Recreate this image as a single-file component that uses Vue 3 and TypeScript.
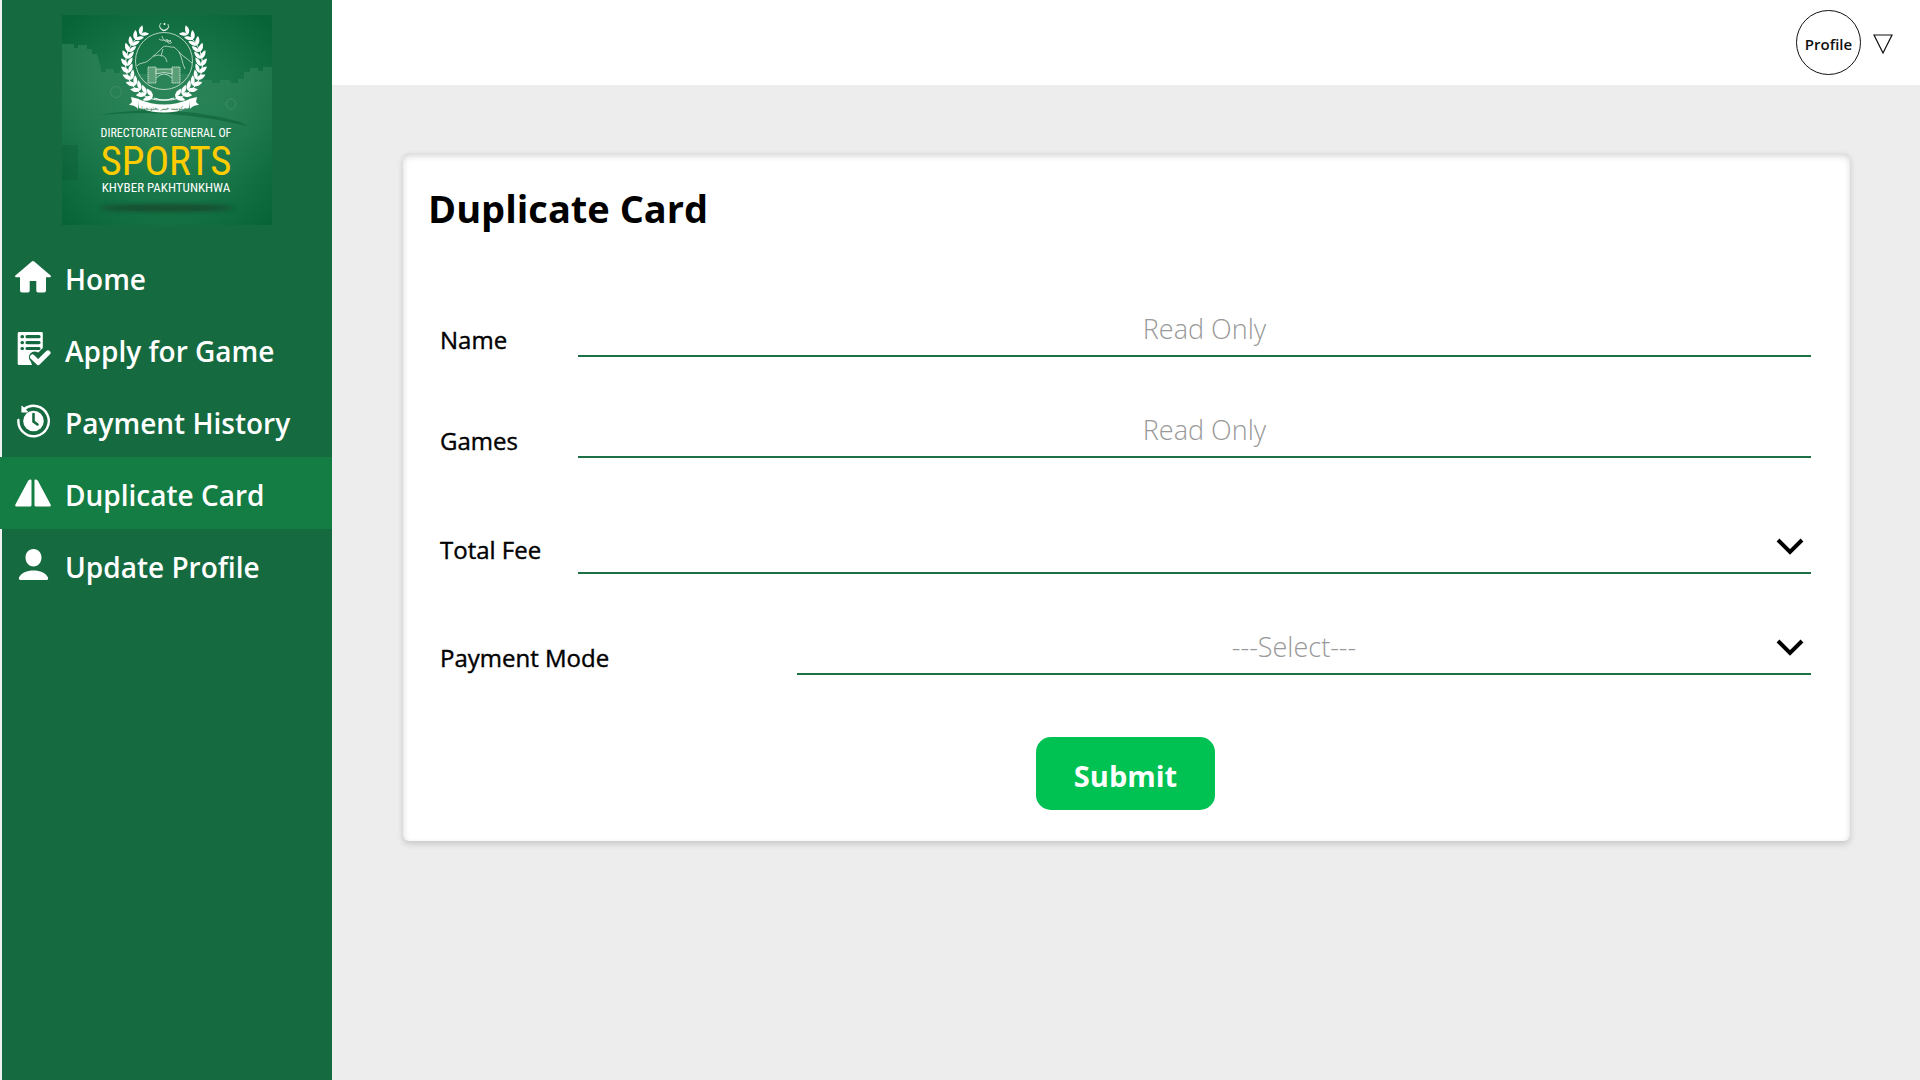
<script setup lang="ts">
import { ref } from 'vue'

interface NavItem {
  label: string
  icon: 'home' | 'apply' | 'history' | 'duplicate' | 'user'
}

interface Leaf {
  x: number
  y: number
  angle: number
  size: number
}

const navItems: NavItem[] = [
  { label: 'Home', icon: 'home' },
  { label: 'Apply for Game', icon: 'apply' },
  { label: 'Payment History', icon: 'history' },
  { label: 'Duplicate Card', icon: 'duplicate' },
  { label: 'Update Profile', icon: 'user' },
]

const active = ref('Duplicate Card')
const totalFee = ref('')
const paymentMode = ref('')

// Leaves of the left laurel branch; the right one is its mirror image.
const leaves: Leaf[] = []
const pairs = 12
for (let i = 0; i < pairs; i++) {
  const deg = 108 + i * 11
  const rad = (deg * Math.PI) / 180
  const x = 102 + 36 * Math.cos(rad)
  const y = 47 + 36 * Math.sin(rad)
  const size = 1.15 - i * 0.012
  leaves.push({ x, y, angle: deg + 90 - 38, size })
  leaves.push({ x, y, angle: deg + 90 + 34, size: size * 0.9 })
}
</script>

<template>
  <div class="layout">
    <aside class="sidebar">
      <svg class="logo" viewBox="0 0 210 210" role="img" aria-label="Directorate General of Sports Khyber Pakhtunkhwa">
        <defs>
          <radialGradient id="logo-bg" cx="50%" cy="52%" r="68%">
            <stop offset="0" stop-color="#228355" />
            <stop offset="0.55" stop-color="#177548" />
            <stop offset="1" stop-color="#066437" />
          </radialGradient>
          <linearGradient id="fort" x1="0" y1="0" x2="0" y2="1">
            <stop offset="0" stop-color="#6aa883" stop-opacity="0.26" />
            <stop offset="1" stop-color="#6aa883" stop-opacity="0" />
          </linearGradient>
          <filter id="soft" x="-20%" y="-200%" width="140%" height="500%">
            <feGaussianBlur stdDeviation="2.5" />
          </filter>
        </defs>
        <rect width="210" height="210" fill="url(#logo-bg)" />
        <path
          d="M0 29h12v4h4v-3h9v4h5v5h5l4 14v4h5v-3h8v4h6v-3h10v4h72v6h10v3h8v-3h10v3h8v-4h6v-7h6v-4h8v3h5v-4h9v110H0z"
          fill="url(#fort)"
        />
        <path d="M38 100 Q108 88 178 107 L186 111 Q108 93 38 100z" fill="#075a32" opacity="0.5" />
        <g fill="none" stroke="#4d9269" stroke-width="1" opacity="0.7">
          <circle cx="54" cy="77" r="5.500" />
          <circle cx="169" cy="89" r="5" />
        </g>
        <path d="M0 130h16v35H0z" fill="#0b5a34" opacity="0.35" />

        <path d="M99 8 A4.500 4.500 0 1 0 106 9 A4.400 4 0 1 1 99 8z" fill="#fff" stroke="#fff" stroke-width="0.4" />
        <circle cx="102.500" cy="9" r="1" fill="#fff" />
        <circle cx="102" cy="46" r="28.500" fill="none" stroke="#d5e8dc" stroke-width="0.8" />
        <g fill="none" stroke="#cfe3d6" stroke-width="0.8">
          <path d="M75 51c3-4 8-2 12-6 6-5 9-8 13-12 3-4 8 0 12-1 5 4 8 9 12 11l6 5" />
          <path d="M91 41c4 0 6-2 8 0 3-1 5 2 6 6M101 34l-2 7M117 37c3 5 3 11 6 17" />
          <path d="M97 24c4 3 8-1 12 3m-9-6c1 5 6 8 9 4m-4-1c0 4 3 6 5 3" />
        </g>
        <g fill="#5b9f77" stroke="#dcebe1" stroke-width="0.8">
          <path d="M86 52h8v16h-8zM110 52h8v16h-8z" stroke-dasharray="1.500 0.500" />
          <path d="M94 54h16v5q-8-3-16 0z" />
          <path d="M94 63q8-8 16 0" fill="none" />
        </g>
        <g v-for="side in 2" :key="side" :transform="side === 2 ? 'translate(204 0) scale(-1 1)' : undefined">
          <path d="M112 83 A36 36 0 0 1 76 22" fill="none" stroke="#fff" stroke-width="1" />
          <path
            v-for="(leaf, i) in leaves"
            :key="i"
            d="M0 0C2-3 6-3.200 9.500 0 6 2.200 2 2 0 0z"
            fill="#fff"
            :transform="`translate(${leaf.x} ${leaf.y}) rotate(${leaf.angle}) scale(${leaf.size})`"
          />
        </g>
        <path d="M69 82l8 2-1 10q-3-4-9-4l3-3z M135 82l-8 2 1 10q3-4 9-4l-3-3z" fill="#fff" />
        <path d="M76 84Q102 95 128 84l-1 9Q102 102 77 93z" fill="#fff" />
        <text x="102" y="95" text-anchor="middle" class="logo-ribbon">حکومت خیبر پختونخوا</text>

        <g text-anchor="middle">
          <text x="104" y="122" class="logo-line">DIRECTORATE GENERAL OF</text>
          <text x="104" y="160" class="logo-sports">SPORTS</text>
          <text x="104" y="177" class="logo-region">KHYBER PAKHTUNKHWA</text>
        </g>
        <ellipse cx="105" cy="193" rx="68" ry="3.500" fill="#184a2e" filter="url(#soft)" />
      </svg>

      <nav class="nav">
        <a
          v-for="item in navItems"
          :key="item.label"
          href="#"
          class="nav-item"
          :class="{ active: item.label === active }"
          @click.prevent="active = item.label"
        >
          <svg class="nav-icon" viewBox="0 0 36 36" aria-hidden="true">
            <path
              v-if="item.icon === 'home'"
              d="M16.800 2.600Q18 1.600 19.200 2.600L35.600 16.600Q36.500 18 35 18.300H31V31.500Q31 33.500 29 33.500H23Q21.300 33.500 21.300 31.800V22H14.700V31.800Q14.700 33.500 13 33.500H7Q5 33.500 5 31.500V18.300H1Q-.5 18 .4 16.600z"
              fill="#fff"
            />
            <template v-else-if="item.icon === 'apply'">
              <path d="M4 1h22.500q1.300 0 1.300 1.300V17l-4.500 4.500q-5-2.500-8 1-3 4 .5 8L17 34H4q-1.300 0-1.300-1.300V2.300Q2.700 1 4 1z" fill="#fff" />
              <g stroke="#156a40" stroke-width="3.200" stroke-linecap="round">
                <path d="M12 5.700h12M12 11.600h12M12 17.500h12" />
                <path d="M7 5.700h.5M7 11.600h.5M7 17.500h.5" />
              </g>
              <path d="M17.500 26l5.700 5.500L33 21.800" fill="none" stroke="#fff" stroke-width="5" stroke-linecap="round" stroke-linejoin="round" />
            </template>
            <template v-else-if="item.icon === 'history'">
              <circle cx="18.500" cy="18" r="10.300" fill="#fff" />
              <path d="M18.500 11v7.500l4 3" fill="none" stroke="#156a40" stroke-width="2.600" stroke-linecap="round" />
              <path d="M3.400 17A15.200 15.200 0 1 0 9 6.200" fill="none" stroke="#fff" stroke-width="2.400" stroke-linecap="round" />
              <path d="M7 3.300v5.700h5.500z" fill="#fff" stroke="#fff" stroke-width="1.200" stroke-linejoin="round" />
            </template>
            <path
              v-else-if="item.icon === 'duplicate'"
              d="M15 4.500q1.500-.5 1.500 1V30q0 1.500-1.500 1.500H1.500Q-.4 31.500.4 29.500L13 6q.8-1.200 2-1.500zM21 4.500q-1.500-.5-1.500 1V30q0 1.500 1.500 1.500h13.500q1.900 0 1.100-2L23 6q-.8-1.200-2-1.500z"
              fill="#fff"
            />
            <path
              v-else
              d="M18.500 2c4.800 0 8 3.700 8 8.500s-3.200 9-8 9-8-4.200-8-9S13.700 2 18.500 2zM4 30.500C6 26 12 23.500 18.500 23.500S31 26 33 30.500q.6 2.500-1.500 2.500h-26Q3.400 33 4 30.500z"
              fill="#fff"
            />
          </svg>
          <span class="nav-label">{{ item.label }}</span>
        </a>
      </nav>
    </aside>

    <div class="main">
      <header class="topbar">
        <button type="button" class="avatar">Profile</button>
        <button type="button" class="menu-toggle" aria-label="Open profile menu">
          <svg viewBox="0 0 20 20" aria-hidden="true">
            <path d="M1 1h18L10 19z" fill="none" stroke="#111" stroke-width="1.200" />
          </svg>
        </button>
      </header>

      <main class="content">
        <form class="card" @submit.prevent>
          <h1 class="title">Duplicate Card</h1>

          <div class="row">
            <label for="name">Name</label>
            <div class="field"><input id="name" type="text" placeholder="Read Only" readonly /></div>
          </div>
          <div class="row">
            <label for="games">Games</label>
            <div class="field"><input id="games" type="text" placeholder="Read Only" readonly /></div>
          </div>
          <div class="row row-fee">
            <label for="fee">Total Fee</label>
            <div class="field">
              <select id="fee" v-model="totalFee">
                <option value=""></option>
              </select>
              <svg class="chevron" viewBox="0 0 28 18" aria-hidden="true">
                <path d="M2 2l12 12L26 2" fill="none" stroke="#000" stroke-width="4" />
              </svg>
            </div>
          </div>
          <div class="row row-mode">
            <label for="mode">Payment Mode</label>
            <div class="field">
              <select id="mode" v-model="paymentMode">
                <option value="">---Select---</option>
              </select>
              <svg class="chevron" viewBox="0 0 28 18" aria-hidden="true">
                <path d="M2 2l12 12L26 2" fill="none" stroke="#000" stroke-width="4" />
              </svg>
            </div>
          </div>

          <button type="submit" class="submit">Submit</button>
        </form>
      </main>
    </div>
  </div>
</template>

<style>
body {
  background: #ededed;
}
</style>

<style scoped>
.layout {
  display: flex;
  min-height: 100vh;
  font-family: 'Segoe UI', 'Open Sans', 'Noto Sans', sans-serif;
  color: #000;
}

.layout *,
.layout *::before {
  box-sizing: border-box;
}

.sidebar {
  display: flex;
  flex-direction: column;
  flex: none;
  width: 332px;
  padding-top: 15px;
  background: #156a40;
  box-shadow: inset 2px 0 #f0f2f1;
}

.logo {
  width: 210px;
  height: 210px;
  margin-left: 62px;
}

.logo-line,
.logo-region {
  font-family: 'Liberation Sans Narrow', 'Roboto Condensed', 'Open Sans', sans-serif;
  font-size: 12px;
  fill: #fff;
}

.logo-region {
  font-size: 13px;
}

.logo-sports {
  font-family: 'Liberation Sans Narrow', 'Roboto Condensed', 'Open Sans', sans-serif;
  font-size: 41px;
  fill: #fc0;
}

.logo-ribbon {
  font-family: 'DejaVu Sans', sans-serif;
  font-size: 5px;
  fill: #156a40;
}

.nav {
  display: flex;
  flex-direction: column;
  margin-top: 16px;
}

.nav-item {
  display: flex;
  align-items: center;
  gap: 14px;
  height: 72px;
  padding-left: 15px;
  color: #fff;
  font-size: 28px;
  font-weight: 600;
  text-decoration: none;
  white-space: nowrap;
}

.nav-item.active {
  background: #137d43;
}

.nav-icon {
  flex: none;
  width: 36px;
  height: 36px;
}

.nav-label {
  padding-top: 3px;
}

.main {
  display: flex;
  flex: 1;
  flex-direction: column;
  min-width: 0;
}

.topbar {
  display: flex;
  align-items: center;
  justify-content: flex-end;
  gap: 12px;
  height: 85px;
  padding-right: 27px;
  background: #fff;
}

button {
  padding: 0;
  border: 0;
  background: none;
  font-family: inherit;
  cursor: pointer;
}

.avatar {
  width: 65px;
  height: 65px;
  padding-top: 3px;
  border: 1px solid #111;
  border-radius: 50%;
  color: #111;
  font-size: 15px;
  font-weight: 600;
}

.menu-toggle {
  width: 20px;
  height: 20px;
  margin-top: 3px;
}

.menu-toggle svg {
  display: block;
}

.content {
  padding: 68px 70px 68px 71px;
}

.card {
  display: flex;
  flex-direction: column;
  padding: 27px 39px 31px 37px;
  border-radius: 6px;
  background: #fff;
  box-shadow:
    0 3px 6px rgba(0, 0, 0, 0.16),
    inset 0 3px 6px rgba(0, 0, 0, 0.16);
}

.title {
  margin: 0 0 73px -12px;
  font-size: 38px;
  font-weight: 700;
  line-height: 56px;
}

.row {
  display: flex;
  align-items: flex-end;
  margin-bottom: 53px;
}

.row label {
  flex: none;
  width: 138px;
  font-size: 24px;
  font-weight: 500;
  line-height: 34px;
  white-space: nowrap;
  -webkit-text-stroke: 0.4px #000;
}

.row-fee {
  margin-top: 15px;
}

.row-fee label {
  padding-bottom: 7px;
}

.row-mode label {
  width: 357px;
}

.field {
  position: relative;
  flex: 1;
  min-width: 0;
}

.field input,
.field select {
  display: block;
  width: 100%;
  height: 48px;
  padding: 0 0 8px 20px;
  border: 0;
  border-bottom: 2px solid #1d7045;
  border-radius: 0;
  outline: 0;
  appearance: none;
  background: transparent;
  color: #999;
  font-family: inherit;
  font-size: 27px;
  font-weight: 300;
  line-height: 38px;
  text-align: center;
  text-align-last: center;
}

.field select {
  padding: 1px 40px 7px 20px;
}

.field input::placeholder {
  color: #999;
  opacity: 1;
}

.chevron {
  position: absolute;
  right: 7px;
  bottom: 18px;
  width: 28px;
  height: 18px;
  pointer-events: none;
}

.submit {
  align-self: center;
  width: 179px;
  height: 73px;
  margin-top: 9px;
  padding-top: 3px;
  border-radius: 15px;
  background: #00c252;
  color: #fff;
  font-size: 29px;
  font-weight: 700;
}
</style>
